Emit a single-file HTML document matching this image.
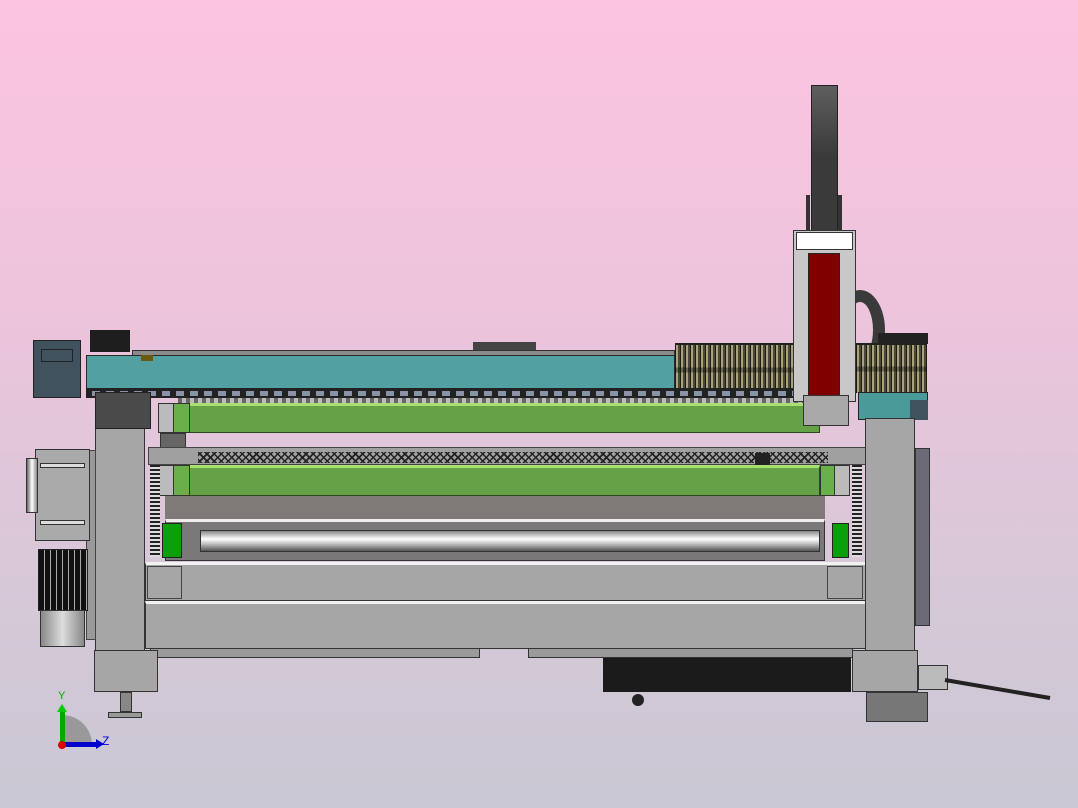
<!DOCTYPE html>
<html><head><meta charset="utf-8"><style>
html,body{margin:0;padding:0}
body{width:1078px;height:808px;position:relative;overflow:hidden;background:linear-gradient(#fcc4e0 0%,#ecc4dc 40%,#d8c8d8 70%,#c9c8d4 100%);font-family:"Liberation Sans",sans-serif}
.a{position:absolute;box-sizing:border-box}
.g{background:#a6a6a6;border:1px solid #333}
.bel{background:linear-gradient(transparent 0 45%,rgba(0,0,0,.35) 45% 55%,transparent 55%),repeating-linear-gradient(90deg,#1e1c14 0 1px,#aaa27a 1px 3px,#4a4836 3px 5px);border-top:2px solid #222}
</style></head><body>
<div class="a" style="left:811px;top:85px;width:27px;height:160px;background:linear-gradient(#5e5e5e,#3a3a3a 45%,#3a3a3a);border:1px solid #222"></div>
<div class="a" style="left:806px;top:195px;width:4px;height:45px;background:#333"></div>
<div class="a" style="left:838px;top:195px;width:4px;height:45px;background:#333"></div>
<div class="a" style="left:835px;top:290px;width:50px;height:80px;border:12px solid #3a3a3a;border-left-color:transparent;border-bottom-color:transparent;border-radius:50%"></div>
<div class="a bel" style="left:675px;top:343px;width:120px;height:52px"></div>
<div class="a bel" style="left:856px;top:343px;width:71px;height:50px"></div>
<div class="a" style="left:878px;top:333px;width:50px;height:11px;background:#222"></div>
<div class="a" style="left:33px;top:340px;width:48px;height:58px;background:#3f525e;border:1px solid #222"></div>
<div class="a" style="left:41px;top:349px;width:32px;height:13px;border:1px solid #222"></div>
<div class="a" style="left:90px;top:330px;width:40px;height:22px;background:#1e1e1e"></div>
<div class="a" style="left:132px;top:350px;width:543px;height:6px;background:#8a8a8a;border:1px solid #333"></div>
<div class="a" style="left:473px;top:342px;width:63px;height:8px;background:#444"></div>
<div class="a" style="left:86px;top:355px;width:589px;height:34px;background:#52a0a2;border:1px solid #2a2a2a"></div>
<div class="a" style="left:141px;top:355px;width:12px;height:6px;background:#6a5a10"></div>
<div class="a" style="left:86px;top:388px;width:720px;height:10px;background:repeating-linear-gradient(90deg,#222 0 6px,#8a92a8 6px 14px);border-top:3px solid #222;border-bottom:2px solid #222"></div>
<div class="a" style="left:858px;top:392px;width:70px;height:28px;background:#4a9a9a;border:1px solid #222"></div>
<div class="a" style="left:910px;top:400px;width:18px;height:20px;background:#3f525e"></div>
<div class="a" style="left:178px;top:398px;width:630px;height:6px;background:repeating-linear-gradient(90deg,#666 0 4px,#bbb 4px 8px)"></div>
<div class="a" style="left:188px;top:403px;width:632px;height:30px;background:#65a146;border:1px solid #2a4a1a;border-top:3px solid #a8e070"></div>
<div class="a" style="left:173px;top:403px;width:17px;height:30px;background:#6ab04a;border:1px solid #333"></div>
<div class="a" style="left:158px;top:403px;width:16px;height:30px;background:#bbb;border:1px solid #333"></div>
<div class="a" style="left:160px;top:433px;width:26px;height:15px;background:#666;border:1px solid #333"></div>
<div class="a" style="left:148px;top:447px;width:720px;height:18px;background:#a0a0a0;border:1px solid #444"></div>
<div class="a" style="left:198px;top:452px;width:630px;height:11px;background:repeating-linear-gradient(135deg,transparent 0 2px,#222 2px 3.5px,transparent 3.5px 5px),repeating-linear-gradient(45deg,transparent 0 2px,#222 2px 3.5px,transparent 3.5px 5px),#a0a0a0"></div>
<div class="a" style="left:755px;top:453px;width:15px;height:12px;background:#222"></div>
<div class="a" style="left:188px;top:465px;width:632px;height:31px;background:#65a146;border:1px solid #2a4a1a;border-top:3px solid #a8e070"></div>
<div class="a" style="left:173px;top:465px;width:17px;height:31px;background:#6ab04a;border:1px solid #333"></div>
<div class="a" style="left:158px;top:465px;width:16px;height:31px;background:#bbb;border:1px solid #333"></div>
<div class="a" style="left:820px;top:465px;width:15px;height:31px;background:#6ab04a;border:1px solid #333"></div>
<div class="a" style="left:834px;top:465px;width:16px;height:31px;background:#bbb;border:1px solid #333"></div>
<div class="a" style="left:165px;top:496px;width:660px;height:24px;background:#7f7a78;border-bottom:1px solid #333"></div>
<div class="a" style="left:165px;top:519px;width:660px;height:42px;background:#7a7878;border:1px solid #333;border-top:3px solid #eee"></div>
<div class="a" style="left:200px;top:530px;width:620px;height:22px;background:linear-gradient(#888,#fff 40%,#ccc 60%,#555);border:1px solid #333"></div>
<div class="a" style="left:162px;top:523px;width:20px;height:35px;background:#0aa00a;border:1px solid #222"></div>
<div class="a" style="left:832px;top:523px;width:17px;height:35px;background:#0aa00a;border:1px solid #222"></div>
<div class="a" style="left:150px;top:465px;width:10px;height:92px;background:repeating-linear-gradient(#222 0 2px,#ddd 2px 4px)"></div>
<div class="a" style="left:852px;top:465px;width:10px;height:92px;background:repeating-linear-gradient(#222 0 2px,#ddd 2px 4px)"></div>
<div class="a g" style="left:145px;top:562px;width:722px;height:39px;border-top:3px solid #f2f2f2"></div>
<div class="a" style="left:147px;top:566px;width:35px;height:33px;border:1px solid #444"></div>
<div class="a" style="left:827px;top:566px;width:36px;height:33px;border:1px solid #444"></div>
<div class="a g" style="left:145px;top:601px;width:722px;height:48px;border-top:3px solid #f2f2f2"></div>
<div class="a" style="left:150px;top:648px;width:330px;height:10px;background:#9a9a9a;border:1px solid #333"></div>
<div class="a" style="left:528px;top:648px;width:325px;height:10px;background:#9a9a9a;border:1px solid #333"></div>
<div class="a" style="left:603px;top:658px;width:248px;height:34px;background:#1b1b1b"></div>
<div class="a" style="left:632px;top:694px;width:12px;height:12px;border-radius:50%;background:#222"></div>
<div class="a g" style="left:95px;top:425px;width:50px;height:232px"></div>
<div class="a" style="left:95px;top:392px;width:56px;height:37px;background:#4a4a4a;border:1px solid #222"></div>
<div class="a g" style="left:94px;top:650px;width:64px;height:42px"></div>
<div class="a" style="left:120px;top:692px;width:12px;height:20px;background:#888;border:1px solid #333"></div>
<div class="a" style="left:108px;top:712px;width:34px;height:6px;background:#999;border:1px solid #333"></div>
<div class="a" style="left:86px;top:450px;width:10px;height:190px;background:#999;border:1px solid #444"></div>
<div class="a g" style="left:35px;top:449px;width:55px;height:92px;background:#aaa"></div>
<div class="a" style="left:26px;top:458px;width:12px;height:55px;background:linear-gradient(90deg,#666,#fff,#888);border:1px solid #333"></div>
<div class="a" style="left:40px;top:463px;width:45px;height:5px;background:#ddd;border:1px solid #333"></div>
<div class="a" style="left:40px;top:520px;width:45px;height:5px;background:#ddd;border:1px solid #333"></div>
<div class="a" style="left:38px;top:549px;width:50px;height:62px;background:repeating-linear-gradient(90deg,#111 0 5px,#aaa 5px 6px);border:1px solid #222"></div>
<div class="a" style="left:40px;top:610px;width:45px;height:37px;background:linear-gradient(90deg,#888,#ddd,#888);border:1px solid #333"></div>
<div class="a g" style="left:865px;top:418px;width:50px;height:240px"></div>
<div class="a" style="left:915px;top:448px;width:15px;height:178px;background:#6b6b78;border:1px solid #333"></div>
<div class="a g" style="left:852px;top:650px;width:66px;height:42px"></div>
<div class="a" style="left:866px;top:692px;width:62px;height:30px;background:#777;border:1px solid #333"></div>
<div class="a" style="left:918px;top:665px;width:30px;height:25px;background:#bbb;border:1px solid #333"></div>
<svg class="a" style="left:0;top:0" width="1078" height="808"><line x1="945" y1="680" x2="1050" y2="698" stroke="#222" stroke-width="4"/></svg>
<div class="a" style="left:793px;top:230px;width:63px;height:172px;background:#c8c8c8;border:1px solid #333"></div>
<div class="a" style="left:796px;top:232px;width:57px;height:18px;background:#fff;border:1px solid #333"></div>
<div class="a" style="left:808px;top:253px;width:32px;height:147px;background:#800000;border:1px solid #222"></div>
<div class="a" style="left:803px;top:395px;width:46px;height:31px;background:#a8a8a8;border:1px solid #333"></div>
<svg class="a" style="left:50px;top:685px" width="70" height="65">
<path d="M12 60 V30 A30 30 0 0 1 42 60 Z" fill="#999"/>
<rect x="10" y="25" width="5" height="35" fill="#0a0"/>
<polygon points="7,27 12,19 17,27" fill="#0c0"/>
<rect x="12" y="57" width="36" height="5" fill="#00c"/>
<polygon points="46,54 54,59 46,64" fill="#00c"/>
<circle cx="12" cy="60" r="4" fill="#d00"/>
<text x="8" y="14" font-size="11" fill="#0a0" font-family="Liberation Sans">Y</text>
<text x="52" y="60" font-size="12" fill="#00d" font-family="Liberation Sans">Z</text>
</svg>
</body></html>
